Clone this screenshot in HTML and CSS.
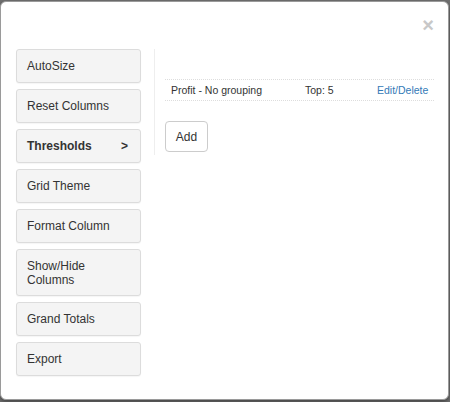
FILE: index.html
```html
<!DOCTYPE html>
<html>
<head>
<meta charset="utf-8">
<link rel="stylesheet" href="styles.css">
</head>
<body>
<div class="modal">
  <div class="modal-header">
    <span class="close">&times;</span>
  </div>
  <div class="modal-body">
    <div class="menu">
      <div class="menu-btn">AutoSize</div>
      <div class="menu-btn">Reset Columns</div>
      <div class="menu-btn active"><span>Thresholds</span><span>&gt;</span></div>
      <div class="menu-btn">Grid Theme</div>
      <div class="menu-btn">Format Column</div>
      <div class="menu-btn two-line">Show/Hide Columns</div>
      <div class="menu-btn">Grand Totals</div>
      <div class="menu-btn">Export</div>
    </div>
    <div class="panel">
      <div class="list">
        <div class="row">
          <span>Profit - No grouping</span>
          <span>Top: 5</span>
          <span class="actions"><a>Edit</a>/<a>Delete</a></span>
        </div>
      </div>
      <button class="add">Add</button>
    </div>
  </div>
</div>
</body>
</html>
```

FILE: styles.css
```css
html, body {
  margin: 0;
  padding: 0;
}
body {
  width: 450px;
  height: 402px;
  background: #6f6f6f;
  font-family: "Liberation Sans", Arial, sans-serif;
  font-size: 12px;
  color: #333;
  position: relative;
  overflow: hidden;
}
.modal {
  position: absolute;
  left: 0;
  top: 1px;
  width: 447px;
  height: 397px;
  background: #fff;
  border: 1px solid #9a9a9a;
  border-radius: 6px;
  box-shadow: 0 2px 4px rgba(0,0,0,.4);
  display: flex;
  flex-direction: column;
}
.modal-header {
  height: 47px;
  display: flex;
  justify-content: flex-end;
  align-items: flex-start;
  padding-right: 14px;
}
.close {
  font-size: 20px;
  font-weight: bold;
  line-height: 1;
  color: #c8c8c8;
  margin-top: 13px;
}
.modal-body {
  display: flex;
  align-items: flex-start;
  padding-left: 15px;
}
.menu {
  width: 125px;
  display: flex;
  flex-direction: column;
  gap: 6px;
  margin-right: 13px;
}
.menu-btn {
  background: #f4f4f4;
  border: 1px solid #dcdcdc;
  border-radius: 3px;
  padding: 9px 10px;
  line-height: 14px;
  box-shadow: 0 1px 1px rgba(0,0,0,.04);
}
.menu-btn.two-line {
  padding-bottom: 8px;
}
.menu-btn.active {
  font-weight: bold;
  display: flex;
  justify-content: space-between;
  padding-right: 12px;
}
.panel {
  border-left: 1px solid #eee;
  padding-left: 10px;
  padding-top: 30px;
  padding-bottom: 3px;
  width: 269px;
}
.row {
  display: grid;
  grid-template-columns: 134px 72px 1fr;
  border-top: 1px dotted #ddd;
  border-bottom: 1px dotted #ddd;
  height: 20px;
  line-height: 20px;
  padding: 0 6px;
  font-size: 10.5px;
}
.actions {
  text-align: right;
  color: #337ab7;
}
.actions a {
  color: #337ab7;
}
.add {
  margin-top: 20px;
  height: 31px;
  width: 43px;
  padding: 0;
  background: #fff;
  border: 1px solid #ccc;
  border-radius: 4px;
  font-family: "Liberation Sans", Arial, sans-serif;
  font-size: 12px;
  color: #333;
}
```
